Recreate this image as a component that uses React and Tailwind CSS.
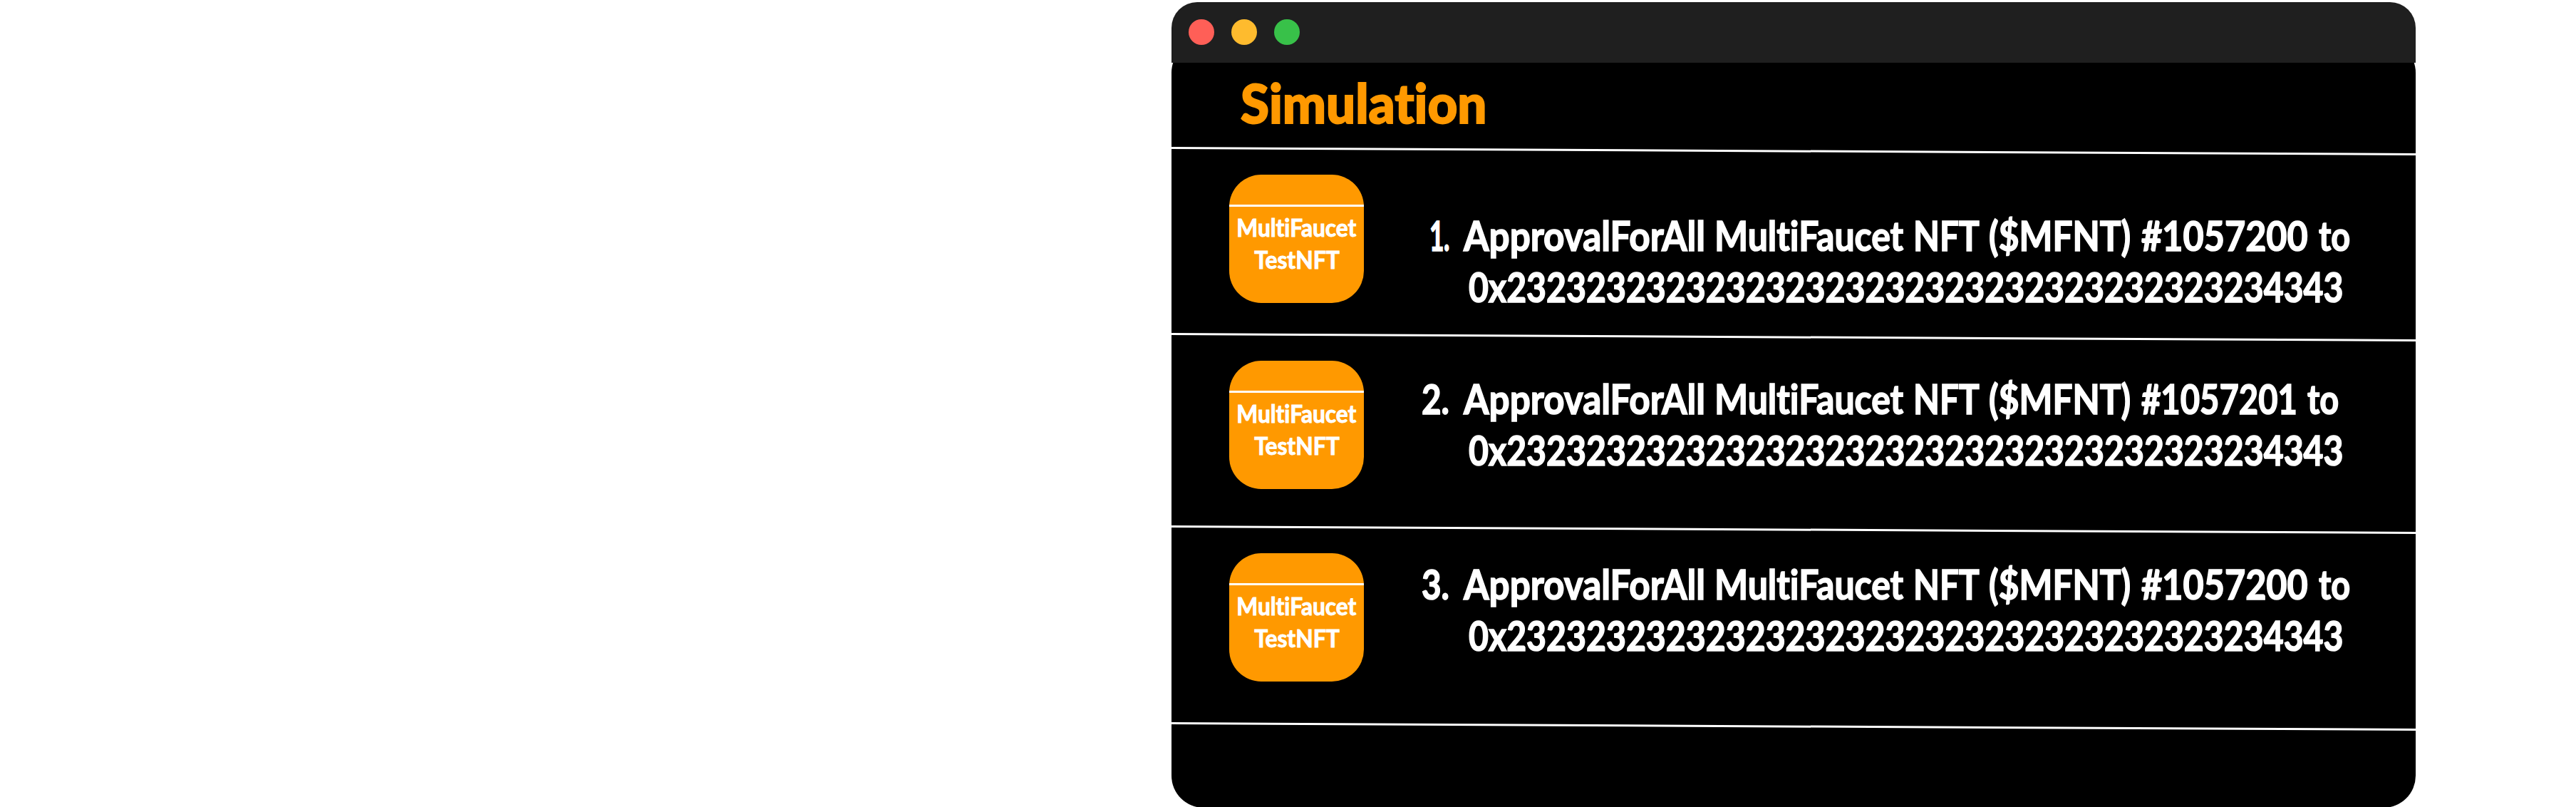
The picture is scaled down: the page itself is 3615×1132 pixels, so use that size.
import React from "react";

const ADDRESS = "0x232323232323232323232323232323232323234343";

const ITEMS = [
  {
    num: "1.",
    numClass: "ml-[2px] scale-x-[0.62] tracking-[-1px]",
    id: "#1057200",
    idClass: "w-[249px]",
    idScale: "scale-x-[0.884]",
    rowClass: "h-[258px]",
    tileClass: "mt-[32px]",
    textClass: "mt-[81px]",
  },
  {
    num: "2.",
    numClass: "-ml-[9px] scale-x-[0.835]",
    id: "#1057201",
    idClass: "w-[233px]",
    idScale: "scale-x-[0.828]",
    rowClass: "h-[267px]",
    tileClass: "mt-[32px]",
    textClass: "mt-[49px]",
  },
  {
    num: "3.",
    numClass: "-ml-[9px] scale-x-[0.835]",
    id: "#1057200",
    idClass: "w-[249px]",
    idScale: "scale-x-[0.884]",
    rowClass: "h-[273px]",
    tileClass: "mt-[32px]",
    textClass: "mt-[39px]",
  },
];

function Divider() {
  return <div className="h-[3px] w-full shrink-0 translate-y-[0.5px] skew-y-[0.295deg] bg-white" />;
}

function Word({ box, scale, children }) {
  return (
    <span className={"block shrink-0 " + box}>
      <span className={"block w-max origin-left " + scale}>{children}</span>
    </span>
  );
}

function Tile({ className }) {
  return (
    <div
      className={
        "ml-[81px] h-[180px] w-[189px] shrink-0 overflow-hidden rounded-[45px] bg-[#ff9900] text-[34px] leading-[45px] font-bold [-webkit-text-stroke:1px_white] " +
        className
      }
    >
      <div className="mt-[42px] h-[3px] bg-white" />
      <div className="mt-[6px] flex flex-col items-center">
        <span className="block w-max scale-x-[0.93]">MultiFaucet</span>
        <span className="block w-max scale-x-[0.935]">TestNFT</span>
      </div>
    </div>
  );
}

function Item({ item }) {
  return (
    <div className={"flex shrink-0 items-start " + item.rowClass}>
      <Tile className={item.tileClass} />
      <div
        className={
          "ml-[90px] text-[57px] leading-[72px] font-bold whitespace-nowrap [-webkit-text-stroke:1.6px_white] " +
          item.textClass
        }
      >
        <div className="flex">
          <Word box="w-[50px]" scale={item.numClass}>{item.num}</Word>
          <Word box="w-[352px]" scale="scale-x-[0.899]">ApprovalForAll</Word>
          <Word box="w-[279px]" scale="scale-x-[0.876]">MultiFaucet</Word>
          <Word box="w-[106px]" scale="scale-x-[0.841]">NFT</Word>
          <Word box="w-[213.5px]" scale="scale-x-[0.8715]">($MFNT)</Word>
          <Word box={item.idClass} scale={item.idScale}>{item.id}</Word>
          <Word box="w-[46px]" scale="scale-x-[0.822]">to</Word>
        </div>
        <div className="ml-[57px] w-max origin-left scale-x-[0.8458]">{ADDRESS}</div>
      </div>
    </div>
  );
}

export default function App() {
  return (
    <div className="h-[1132px] w-[3615px] overflow-hidden bg-white pt-[3px] pl-[1644px] font-[Lato,sans-serif] text-white [font-variant-ligatures:none]">
      <div className="relative z-10 flex h-[85px] w-[1746px] items-start gap-6 rounded-t-[36px] bg-[#1f1f1f] pt-[24px] pl-[24px]">
        <span className="size-9 rounded-full bg-[#ff5f57]" />
        <span className="size-9 rounded-full bg-[#febb2e]" />
        <span className="size-9 rounded-full bg-[#38c149]" />
      </div>
      <div className="-mt-[31px] flex h-[1076px] w-[1746px] flex-col overflow-hidden rounded-[45px] bg-black pt-[31px]">
        <div className="h-[122px] shrink-0">
          <h1 className="ml-[97px] w-max origin-left scale-x-[0.955] pt-[11px] text-[76px] leading-[90px] font-black text-[#ff9900] [-webkit-text-stroke:2px_#ff9900]">
            Simulation
          </h1>
        </div>
        <Divider />
        {ITEMS.map((item) => (
          <React.Fragment key={item.num}>
            <Item item={item} />
            <Divider />
          </React.Fragment>
        ))}
      </div>
    </div>
  );
}
